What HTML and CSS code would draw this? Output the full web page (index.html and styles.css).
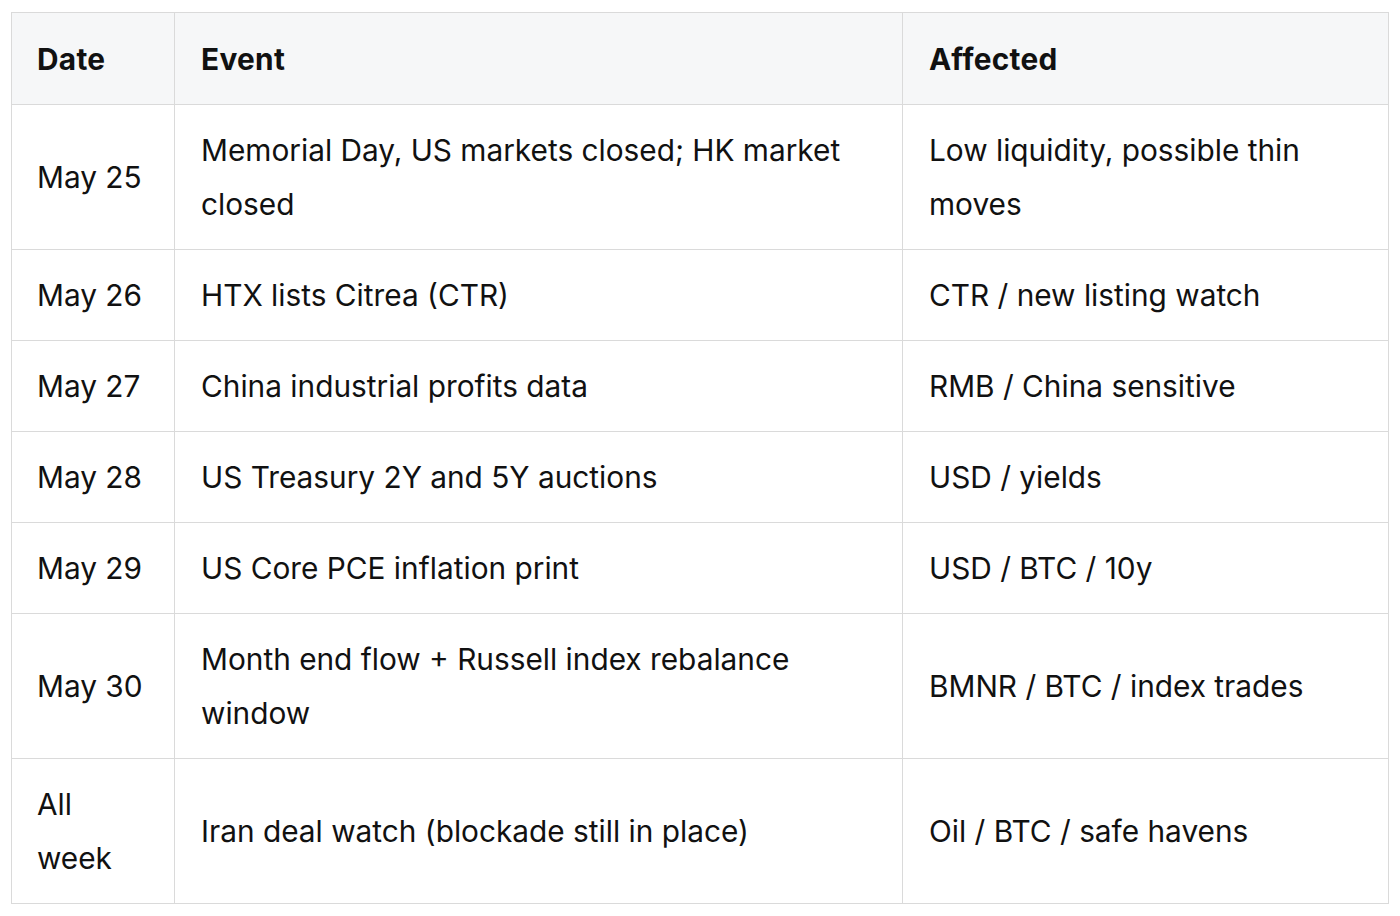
FILE: index.html
```html
<!DOCTYPE html>
<html>
<head>
<meta charset="utf-8">
<link rel="stylesheet" href="styles.css">
</head>
<body>
<table class="schedule">
  <colgroup>
    <col class="c-date">
    <col class="c-event">
    <col class="c-affected">
  </colgroup>
  <thead>
    <tr><th>Date</th><th>Event</th><th>Affected</th></tr>
  </thead>
  <tbody>
    <tr><td>May 25</td><td>Memorial Day, US markets closed; HK market closed</td><td>Low liquidity, possible thin moves</td></tr>
    <tr><td>May 26</td><td>HTX lists Citrea (CTR)</td><td>CTR / new listing watch</td></tr>
    <tr><td>May 27</td><td>China industrial profits data</td><td>RMB / China sensitive</td></tr>
    <tr><td>May 28</td><td>US Treasury 2Y and 5Y auctions</td><td>USD / yields</td></tr>
    <tr><td>May 29</td><td>US Core PCE inflation print</td><td>USD / BTC / 10y</td></tr>
    <tr><td>May 30</td><td>Month end flow + Russell index rebalance window</td><td>BMNR / BTC / index trades</td></tr>
    <tr><td>All week</td><td>Iran deal watch (blockade still in place)</td><td>Oil / BTC / safe havens</td></tr>
  </tbody>
</table>
</body>
</html>
```
FILE: styles.css
```css
html, body {
  margin: 0;
  padding: 0;
  background: #ffffff;
}
body {
  padding: 12px 0 0 11px;
  font-family: Inter, "Liberation Sans", sans-serif;
  color: #111111;
}
.schedule {
  border-collapse: collapse;
  table-layout: fixed;
  width: 1377px;
  font-size: 29.8px;
  line-height: 54px;
}
.c-date { width: 163px; }
.c-event { width: 728px; }
.c-affected { width: 486px; }
.schedule th,
.schedule td {
  border: 1px solid #dadada;
  padding: 18px 25px 18px 26px;
  text-align: left;
  vertical-align: middle;
}
.schedule td:first-child,
.schedule th:first-child {
  padding-left: 25px;
}
.schedule th {
  background: #f6f7f8;
  font-weight: 700;
  letter-spacing: 0.3px;
  padding-top: 18.5px;
  padding-bottom: 18.5px;
}
.schedule td {
  font-weight: 400;
}
```
